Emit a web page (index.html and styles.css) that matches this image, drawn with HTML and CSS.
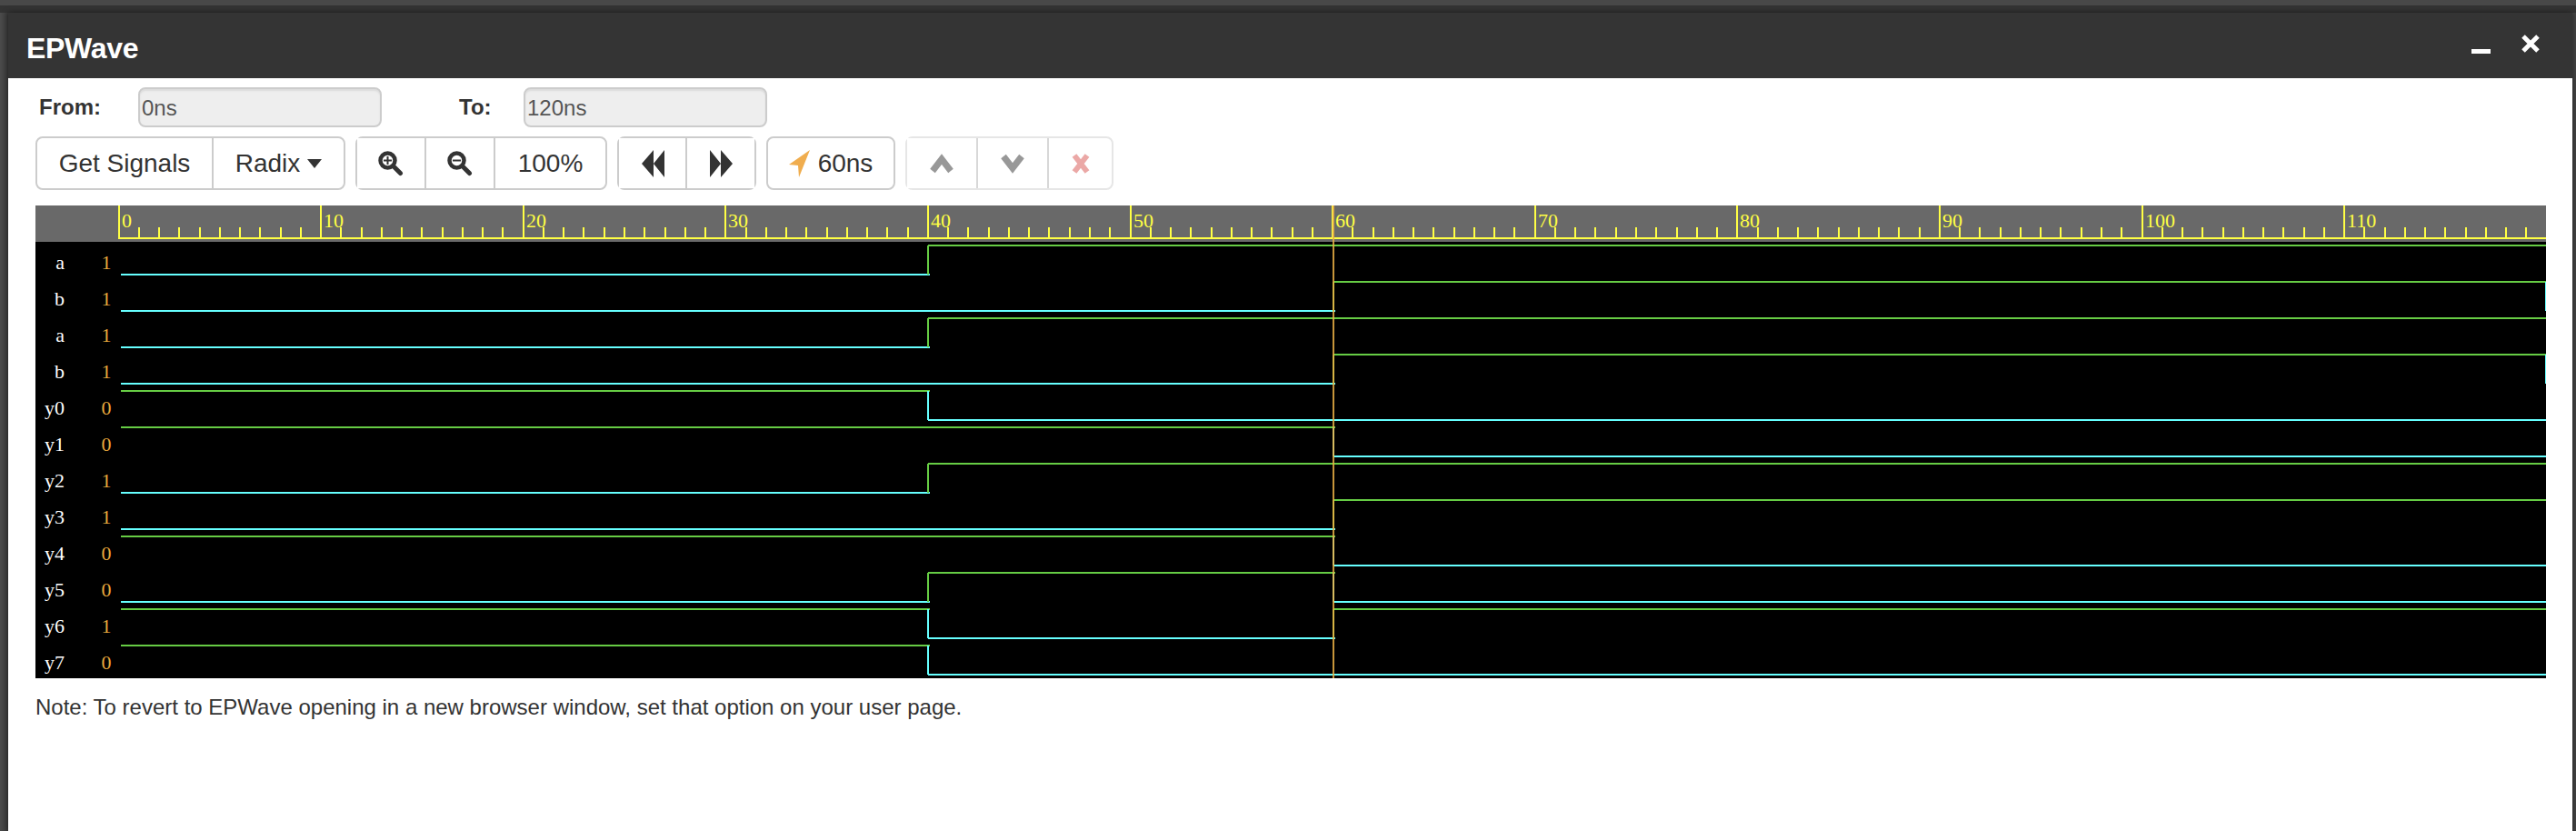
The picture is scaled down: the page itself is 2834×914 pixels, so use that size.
FILE: index.html
```html
<!DOCTYPE html>
<html lang="en">
<head>
  <meta charset="utf-8">
  <title>EPWave</title>
  <link rel="stylesheet" href="styles.css">
</head>
<body>
  <div class="window">
    <header class="titlebar">
      <h1>EPWave</h1>
      <svg class="win-icon" width="76" height="24" viewBox="0 0 76 24">
        <!-- minimize -->
        <path d="M1 19.5H22" stroke="#fff" stroke-width="5" fill="none"/>
        <!-- close -->
        <path d="M58 3L74 19M74 3L58 19" stroke="#fff" stroke-width="5" fill="none"/>
      </svg>
    </header>

    <main class="content">
      <div class="range-row">
        <label class="from-label">From:</label>
        <input class="range-input" value="0ns" disabled>
        <label class="to-label">To:</label>
        <input class="range-input" value="120ns" disabled>
      </div>

      <div class="toolbar">
        <div class="btn-group">
          <button class="btn btn-signals">Get Signals</button>
          <button class="btn btn-radix">Radix <span class="caret"></span></button>
        </div>
        <div class="btn-group">
          <button class="btn btn-icon">
            <svg width="28" height="28" viewBox="0 0 28 28"><circle cx="10.5" cy="10.5" r="8" fill="none" stroke="#333" stroke-width="4.5"/><path d="M16.5 16.5L24.5 24.5" stroke="#333" stroke-width="5" stroke-linecap="round"/><path d="M6 10.5H15M10.5 6V15" stroke="#333" stroke-width="2"/></svg>
          </button>
          <button class="btn btn-icon">
            <svg width="28" height="28" viewBox="0 0 28 28"><circle cx="10.5" cy="10.5" r="8" fill="none" stroke="#333" stroke-width="4.5"/><path d="M16.5 16.5L24.5 24.5" stroke="#333" stroke-width="5" stroke-linecap="round"/><path d="M6 10.5H15" stroke="#333" stroke-width="2"/></svg>
          </button>
          <button class="btn btn-zoom">100%</button>
        </div>
        <div class="btn-group">
          <button class="btn btn-nav">
            <svg width="26" height="32" viewBox="0 0 26 32"><path d="M13 1V31L0 16ZM25 1V31L13 16Z" fill="#333"/></svg>
          </button>
          <button class="btn btn-nav">
            <svg width="26" height="32" viewBox="0 0 26 32"><path d="M1 1V31L13 16ZM13 1V31L26 16Z" fill="#333"/></svg>
          </button>
        </div>
        <div class="btn-group">
          <button class="btn btn-cursor">
            <svg width="24" height="30" viewBox="0 0 24 30"><path d="M23 0L11 30L10 17L0 16Z" fill="#f0ad4e"/></svg>
            60ns
          </button>
        </div>
        <div class="btn-group group-off">
          <button class="btn btn-move">
            <svg width="26" height="22" viewBox="0 0 26 22"><path d="M3 19L13 6L23 19" fill="none" stroke="#333" stroke-width="7"/></svg>
          </button>
          <button class="btn btn-move">
            <svg width="26" height="22" viewBox="0 0 26 22"><path d="M3 3L13 16L23 3" fill="none" stroke="#333" stroke-width="7"/></svg>
          </button>
          <button class="btn btn-del">
            <svg width="20" height="24" viewBox="0 0 20 24"><path d="M3 3L17 21M17 3L3 21" fill="none" stroke="#d9534f" stroke-width="6"/></svg>
          </button>
        </div>
      </div>

      <div id="wave" class="wave"></div>

      <p class="note">Note: To revert to EPWave opening in a new browser window, set that option on your user page.</p>
    </main>
  </div>

  <script src="wave.js"></script>
</body>
</html>
```

FILE: styles.css
```css
* {
  box-sizing: border-box;
}

html, body {
  height: 100%;
}

body {
  margin: 0;
  padding: 14px 4px 0 9px;
  background: linear-gradient(#484848 6px, #333 6px, #333 14px, transparent 14px),
    linear-gradient(90deg, #4c4c4c, #3a3a3a 9px, #3a3a3a 2830px, #444 2830px);
  font-family: "Liberation Sans", Arial, sans-serif;
  color: #333;
  overflow: hidden;
}

.window {
  height: 900px;
  background: white;
  box-shadow: 0 0 6px rgba(0, 0, 0, 0.5);
}

.titlebar {
  height: 72px;
  background-color: #343434;
  color: white;
  display: flex;
  align-items: flex-start;
  justify-content: space-between;
  padding: 21px 36px 0 20px;
}

.titlebar h1 {
  margin: 0;
  font-size: 32px;
  line-height: 36px;
  font-weight: bold;
  letter-spacing: -0.3px;
}

.win-icon {
  margin-top: 2px;
  display: block;
}

.content {
  padding: 10px 29px 0 30px;
}

.range-row {
  display: flex;
  align-items: center;
  height: 44px;
}

.range-row label {
  font-size: 24px;
  font-weight: bold;
}

.from-label {
  margin-left: 4px;
  width: 109px;
}

.to-label {
  margin-left: 85px;
  width: 71px;
}

.range-input {
  width: 268px;
  height: 44px;
  padding: 2px 2px 0;
  background-color: #eee;
  border: 2px solid #ccc;
  border-radius: 8px;
  font-family: inherit;
  font-size: 24px;
  color: #555;
  box-shadow: inset 0 2px 2px rgba(0, 0, 0, 0.08);
}

.toolbar {
  display: flex;
  gap: 11px;
  margin-top: 10px;
}

.btn-group {
  display: flex;
  height: 59px;
  border: 2px solid #ccc;
  border-radius: 8px;
}

.btn {
  display: flex;
  align-items: center;
  justify-content: center;
  height: 100%;
  padding: 0;
  background: white;
  border: 0;
  border-right: 2px solid #ccc;
  border-radius: 8px;
  font-family: inherit;
  font-size: 28px;
  color: #333;
}

.btn:last-child {
  border-right: 0;
}

.btn-signals { width: 194px; border-radius: 8px 0 0 8px; }
.btn-radix { width: 143px; gap: 8px; border-radius: 0 8px 8px 0; }
.btn-icon { width: 76px; border-radius: 0; }
.btn-zoom { width: 121px; }
.btn-nav { width: 74.5px; border-radius: 0; }
.btn-nav:first-child { padding-left: 3px; }
.btn-cursor { width: 138px; gap: 8px; }
.btn-move { width: 78px; border-radius: 0; }
.btn-del { width: 69px; }

.caret {
  width: 0;
  height: 0;
  border-top: 10px solid #333;
  border-left: 8px solid transparent;
  border-right: 8px solid transparent;
}

/* disabled look for the move and delete buttons */
.group-off {
  border-color: #e6e6e6;
}

.group-off .btn {
  border-right-color: #d8d8d8;
}

.group-off svg {
  opacity: 0.5;
}

.wave {
  margin-top: 17px;
  height: 520px;
}

.wave svg {
  display: block;
}

.note {
  margin: 18px 0 0;
  font-size: 24px;
  line-height: 28px;
  color: #333;
}
```

FILE: wave.js
```js
var NS = "http://www.w3.org/2000/svg";
var W = 2762, H = 520;
var RULER = 40, ROW = 40;
var X0 = 91.5, NS_PX = 22.26; // x of time 0, pixels for 1ns
var END = 120;

// each signal: name, shown value, then [time, level] steps
var signals = [
  ["a", 1, [[0, 0], [40, 1]]],
  ["b", 1, [[0, 0], [60, 1], [120, 0]]],
  ["a", 1, [[0, 0], [40, 1]]],
  ["b", 1, [[0, 0], [60, 1], [120, 0]]],
  ["y0", 0, [[0, 1], [40, 0]]],
  ["y1", 0, [[0, 1], [60, 0]]],
  ["y2", 1, [[0, 0], [40, 1]]],
  ["y3", 1, [[0, 0], [60, 1]]],
  ["y4", 0, [[0, 1], [60, 0]]],
  ["y5", 0, [[0, 0], [40, 1], [60, 0]]],
  ["y6", 1, [[0, 1], [40, 0], [60, 1]]],
  ["y7", 0, [[0, 1], [40, 0]]]
];

var svg = document.createElementNS(NS, "svg");
svg.setAttribute("width", W);
svg.setAttribute("height", H);

function add(tag, attrs, text) {
  var el = document.createElementNS(NS, tag);
  for (var k in attrs) el.setAttribute(k, attrs[k]);
  if (text !== undefined) el.textContent = text;
  svg.appendChild(el);
}

// ruler ticks
function tx(t) {
  return Math.round(X0 + t * NS_PX);
}

// signal edges and the cursor sit on the next whole pixel
function edge(t) {
  return Math.min(Math.ceil(X0 + t * NS_PX), W);
}

function line(x1, y1, x2, y2, color) {
  add("line", { x1: x1, y1: y1, x2: x2, y2: y2, stroke: color, "stroke-width": 2 });
}

var YELLOW = "#ffff44", CYAN = "#66ffff", GREEN = "#66cc44";

add("rect", { x: 0, y: 0, width: W, height: H, fill: "#000" });
add("rect", { x: 0, y: 0, width: W, height: RULER, fill: "#696969" });

// ruler
line(tx(0) - 1, 36, tx(END) + 1, 36, YELLOW);
for (var t = 0; t < END; t++) {
  var major = t % 10 == 0;
  line(tx(t), major ? 0 : 24, tx(t), 36, YELLOW);
  if (major) {
    add("text", { x: tx(t) + 3, y: 24, fill: YELLOW, "font-family": "Liberation Serif", "font-size": 22 }, t);
  }
}
line(tx(END), 0, tx(END), 36, YELLOW);

// rows
signals.forEach(function (s, i) {
  var top = RULER + i * ROW;
  var hi = top + 4, lo = top + 36;
  add("text", { x: 32, y: top + 30, fill: "#fff", "text-anchor": "end", "font-family": "Liberation Serif", "font-size": 22 }, s[0]);
  add("text", { x: 78, y: top + 30, fill: "#e8a93c", "text-anchor": "middle", "font-family": "Liberation Serif", "font-size": 22 }, s[1]);

  var steps = s[2];
  steps.forEach(function (step, j) {
    var level = step[1];
    var y = level ? hi : lo;
    var x1 = j == 0 ? 94 : edge(step[0]);
    var x2 = j + 1 < steps.length ? edge(steps[j + 1][0]) : W;
    var color = level ? GREEN : CYAN;
    if (x2 > x1) line(x1, y, x2 + 2, y, color);
    if (j > 0) line(x1, hi, x1, lo, color);
  });
});

// cursor at 60ns
add("line", { x1: edge(60), y1: 0, x2: edge(60), y2: H, stroke: "#eab045", "stroke-width": 2, opacity: 0.85 });

document.getElementById("wave").appendChild(svg);
```
